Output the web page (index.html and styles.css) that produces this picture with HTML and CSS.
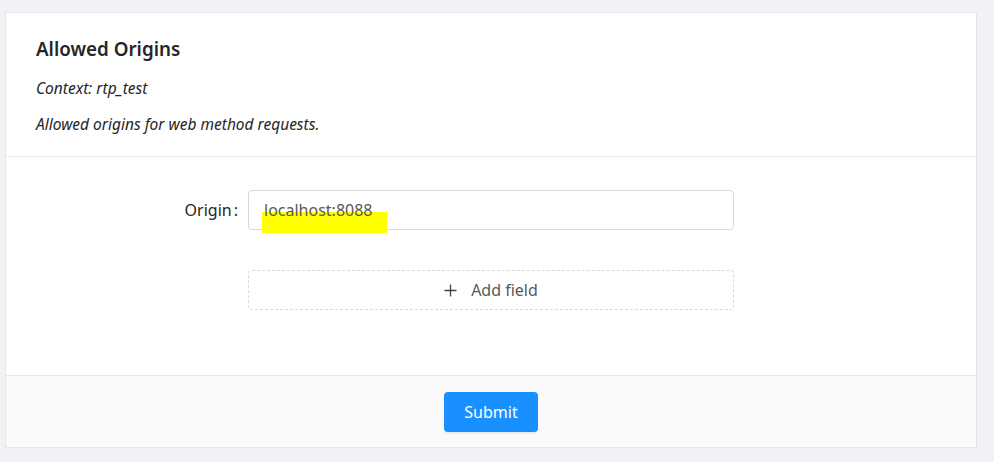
FILE: index.html
```html
<!DOCTYPE html>
<html>
<head>
<meta charset="utf-8">
<link rel="stylesheet" href="styles.css">
</head>
<body>
<div class="card">
  <div class="card-head">
    <h3 class="title">Allowed Origins</h3>
    <p class="meta">Context: rtp_test</p>
    <p class="meta">Allowed origins for web method requests.</p>
  </div>
  <div class="card-body">
    <div class="row">
      <label class="label">Origin</label>
      <div class="control">
        <div class="input">
          <span class="mark"></span>
          <span class="value">localhost:8088</span>
        </div>
      </div>
    </div>
    <div class="row">
      <div class="label"></div>
      <div class="control">
        <button class="add">
          <svg class="plus" width="13" height="13" viewBox="0 0 13 13"><path d="M6.5 0.5v12M0.5 6.5h12" stroke="#434343" stroke-width="1.3" fill="none"/></svg>
          <span>Add field</span>
        </button>
      </div>
    </div>
  </div>
  <div class="card-foot">
    <button class="submit">Submit</button>
  </div>
</div>
</body>
</html>
```
FILE: styles.css
```css
* { box-sizing: border-box; }
body {
  margin: 0;
  background: #f0f2f5;
  font-family: "Segoe UI", "Noto Sans", sans-serif;
  color: rgba(0,0,0,0.85);
  padding: 12px 17px 14px 5px;
}
.card {
  background: #fff;
  border: 1px solid #e6e6e6;
  height: 436px;
  display: flex;
  flex-direction: column;
}
.card-head {
  height: 144px;
  padding: 24px 30px 0;
  border-bottom: 1px solid #e8e8e8;
}
.title {
  margin: 0 0 16px;
  font-size: 18.8px;
  font-weight: 600;
  line-height: 24px;
  color: #262626;
}
.meta {
  margin: 0 0 14px;
  font-size: 15.5px;
  line-height: 22px;
  font-style: italic;
  color: #262626;
}
.card-body {
  flex: 1;
  padding-top: 33px;
  display: flex;
  flex-direction: column;
  gap: 40px;
}
.row {
  display: flex;
  align-items: center;
}
.label {
  width: 242px;
  padding-right: 10px;
  text-align: right;
  font-size: 16px;
  color: #262626;
}
.label:not(:empty)::after {
  content: ":";
  margin-left: 2px;
}
.control { width: 486px; }
.input {
  position: relative;
  height: 40px;
  border: 1px solid #d9d9d9;
  border-radius: 4px;
  padding: 0 15px;
  display: flex;
  align-items: center;
  font-size: 16px;
  color: #595959;
}
.value { position: relative; }
.mark {
  position: absolute;
  left: 13px;
  top: 21px;
  width: 125px;
  height: 21px;
  background: #ffff00;
}
.add {
  width: 100%;
  height: 40px;
  border: 1px dashed #d9d9d9;
  border-radius: 4px;
  background: #fff;
  font-family: inherit;
  font-size: 16px;
  color: #595959;
  display: flex;
  align-items: center;
  justify-content: center;
  gap: 14px;
  padding: 0;
}
.card-foot {
  height: 72px;
  border-top: 1px solid #e8e8e8;
  background: #fafafa;
  display: flex;
  justify-content: center;
  padding-top: 16px;
}
.submit {
  width: 94px;
  height: 40px;
  border: none;
  border-radius: 4px;
  background: #1890ff;
  color: #fff;
  font-family: inherit;
  font-size: 16px;
  box-shadow: 0 2px 0 rgba(0,0,0,0.05);
}
```
